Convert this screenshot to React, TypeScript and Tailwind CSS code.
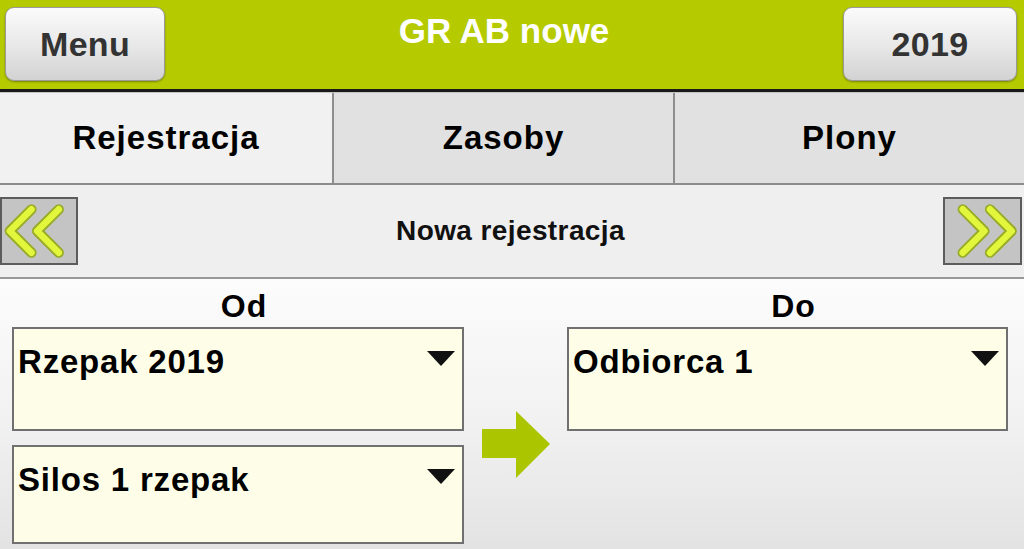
import React from 'react'

function HeaderButton({ label, className }: { label: string; className: string }) {
  return (
    <button
      className={`flex h-[74px] items-center justify-center rounded-[9px] border border-[#9a9a9a] bg-[linear-gradient(180deg,#fbfbfb_0%,#e9e9e9_50%,#d2d2d2_100%)] text-[34px] font-bold tracking-[0.3px] text-[#333] shadow-[0_1px_2px_rgba(0,0,0,0.35)] ${className}`}
    >
      {label}
    </button>
  )
}

function Chevrons({ dir }: { dir: 'left' | 'right' }) {
  const paths =
    dir === 'left'
      ? ['M31 11 L8 34 L31 57', 'M60 11 L37 34 L60 57']
      : ['M18 11 L41 34 L18 57', 'M47 11 L70 34 L47 57']
  return (
    <svg width="100%" height="100%" viewBox="0 0 78 68">
      {paths.map((d) => (
        <g key={d}>
          <path d={d} fill="none" stroke="#98ab26" strokeWidth="11" strokeLinejoin="round" strokeLinecap="round" />
          <path d={d} fill="none" stroke="#e2f73c" strokeWidth="7" strokeLinejoin="round" strokeLinecap="round" />
        </g>
      ))}
    </svg>
  )
}

function Select({ value, className = '' }: { value: string; className?: string }) {
  return (
    <div className={`flex items-start justify-between border-2 border-[#707070] bg-[#fefee8] pt-[16px] pl-[4px] pr-[7px] ${className}`}>
      <span className="text-[33px] font-bold leading-none tracking-[0.8px] text-black">{value}</span>
      <svg width="28" height="15" viewBox="0 0 28 15" className="mt-[6px]">
        <path d="M0 0 H28 L14 15 Z" fill="#111" />
      </svg>
    </div>
  )
}

export default function App() {
  const tabs = [
    { label: 'Rejestracja', width: 'w-[332px]', bg: 'bg-[#f1f1f1]' },
    { label: 'Zasoby', width: 'w-[341px]', bg: 'bg-[#e1e1e1]' },
    { label: 'Plony', width: 'flex-1', bg: 'bg-[#e1e1e1]' },
  ]

  return (
    <div className="flex h-[549px] w-[1024px] flex-col overflow-hidden bg-white font-['Liberation_Sans',Arial,sans-serif]">
      <header className="flex h-[92px] shrink-0 items-start border-b-[3px] border-[#1a1a1a] bg-[#b6ca00] pt-[7px] pl-[5px] pr-[7px]">
        <HeaderButton label="Menu" className="w-[160px]" />
        <h1 className="mt-[6px] flex-1 text-center text-[35px] font-bold leading-none text-white">GR AB nowe</h1>
        <HeaderButton label="2019" className="w-[174px]" />
      </header>

      <nav className="flex h-[93px] shrink-0 border-t border-[#c4c4c4] border-b-2 border-b-[#8c8c8c]">
        {tabs.map((tab, i) => (
          <div
            key={tab.label}
            className={`flex items-center justify-center ${tab.width} ${tab.bg} ${i > 0 ? 'border-l-2 border-[#8e8e8e]' : ''}`}
          >
            <span className="text-[33px] font-bold tracking-[1px] text-black">{tab.label}</span>
          </div>
        ))}
      </nav>

      <div className="flex h-[94px] shrink-0 items-center justify-between border-b-2 border-[#999] bg-[#efefef] pr-[2px]">
        <div className="h-[68px] w-[78px] border-2 border-[#5c5c5c] bg-[#c4c4c4]">
          <Chevrons dir="left" />
        </div>
        <span className="text-[28px] font-bold tracking-[0.4px] text-[#111]">Nowa rejestracja</span>
        <div className="h-[68px] w-[79px] border-2 border-[#5c5c5c] bg-[#c4c4c4]">
          <Chevrons dir="right" />
        </div>
      </div>

      <main className="flex flex-1 bg-[linear-gradient(180deg,#fcfcfc_0%,#f2f2f2_50%,#e3e3e3_100%)] pt-[11px] pl-[12px]">
        <section className="flex w-[452px] flex-col">
          <h2 className="mb-[5px] pl-[12px] text-center text-[32px] font-bold leading-none tracking-[1px] text-black">Od</h2>
          <Select value="Rzepak 2019" className="h-[104px]" />
          <Select value="Silos 1 rzepak" className="mt-[14px] h-[99px]" />
        </section>

        <div className="flex w-[103px] justify-center pt-[121px]">
          <svg width="68" height="67" viewBox="0 0 68 67">
            <path d="M0 18 H34 V0 L68 33 L34 67 V47 H0 Z" fill="#abc500" />
          </svg>
        </div>

        <section className="flex w-[441px] flex-col">
          <h2 className="mb-[5px] pl-[12px] text-center text-[32px] font-bold leading-none tracking-[1px] text-black">Do</h2>
          <Select value="Odbiorca 1" className="h-[104px]" />
        </section>
      </main>
    </div>
  )
}
